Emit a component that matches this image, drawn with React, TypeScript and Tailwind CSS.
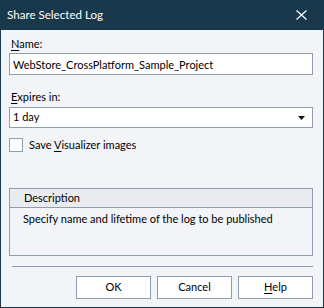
import { useState } from 'react';

const FONT = 'Lato, "Liberation Sans", Arial, sans-serif';

function CloseIcon() {
  return (
    <svg width="11" height="10" viewBox="0 0 11 10" fill="none" stroke="white" strokeWidth="1.2">
      <path d="M0.5 0.5 L10.5 9.5 M10.5 0.5 L0.5 9.5" />
    </svg>
  );
}

function Caret() {
  return (
    <svg width="7" height="4" viewBox="0 0 7 4" fill="#111">
      <path d="M0 0 H7 L3.5 4 Z" />
    </svg>
  );
}

export default function App() {
  const [name, setName] = useState('WebStore_CrossPlatform_Sample_Project');
  const [saveImages, setSaveImages] = useState(false);

  return (
    <div
      className="w-[324px] h-[308px] bg-[#19384b] flex flex-col text-[11px] text-black whitespace-nowrap"
      style={{ fontFamily: FONT }}
    >
      {/* Title bar */}
      <div className="h-[30px] shrink-0 flex items-center justify-between pl-[7px] pr-[17px] text-white text-[11.6px]">
        <span>Share Selected Log</span>
        <CloseIcon />
      </div>

      {/* Body */}
      <div className="flex-1 mx-[1px] mb-[1px] bg-[#f3f4f7] pl-[8px] pr-[10px] pt-[6px] flex flex-col">
        <label className="h-[16px] leading-[16px] pl-[2px]">
          <span className="underline underline-offset-2">N</span>ame:
        </label>
        <input
          className="mt-[1px] h-[22px] border border-[#8f9db2] bg-white px-[3px] outline-none leading-[20px]"
          value={name}
          onChange={(e) => setName(e.target.value)}
        />

        <label className="mt-[14px] h-[16px] leading-[16px] pl-[2px]">
          <span className="underline underline-offset-2">E</span>xpires in:
        </label>
        <div className="mt-[2px] h-[21px] border border-[#8f9db2] bg-white flex items-center justify-between pl-[3px] pr-[7px]">
          <span>1 day</span>
          <Caret />
        </div>

        <label className="mt-[10px] flex items-center gap-[6px] h-[14px]">
          <span
            className="w-[14px] h-[14px] border border-[#8f9db2] bg-white"
            onClick={() => setSaveImages(!saveImages)}
          />
          <span>
            Save <span className="underline underline-offset-2">V</span>isualizer images
          </span>
        </label>

        {/* Description panel */}
        <div className="mt-[36px] h-[68px] border border-[#8f9db2] flex flex-col">
          <div className="h-[19px] bg-[#e9ebef] border-b border-[#8f9db2] flex items-center pl-[14px]">
            Description
          </div>
          <div className="pl-[13px] pt-[3px]">
            Specify name and lifetime of the log to be published
          </div>
        </div>

        <div className="mt-[10px] ml-[3px] h-px bg-[#8f9db2]" />

        <div className="mt-[9px] flex justify-end gap-[6px]">
          <button className="w-[75px] h-[23px] border border-[#8f9db2] bg-white">OK</button>
          <button className="w-[75px] h-[23px] border border-[#8f9db2] bg-white">Cancel</button>
          <button className="w-[75px] h-[23px] border border-[#8f9db2] bg-white">
            <span className="underline underline-offset-2">H</span>elp
          </button>
        </div>
      </div>
    </div>
  );
}
